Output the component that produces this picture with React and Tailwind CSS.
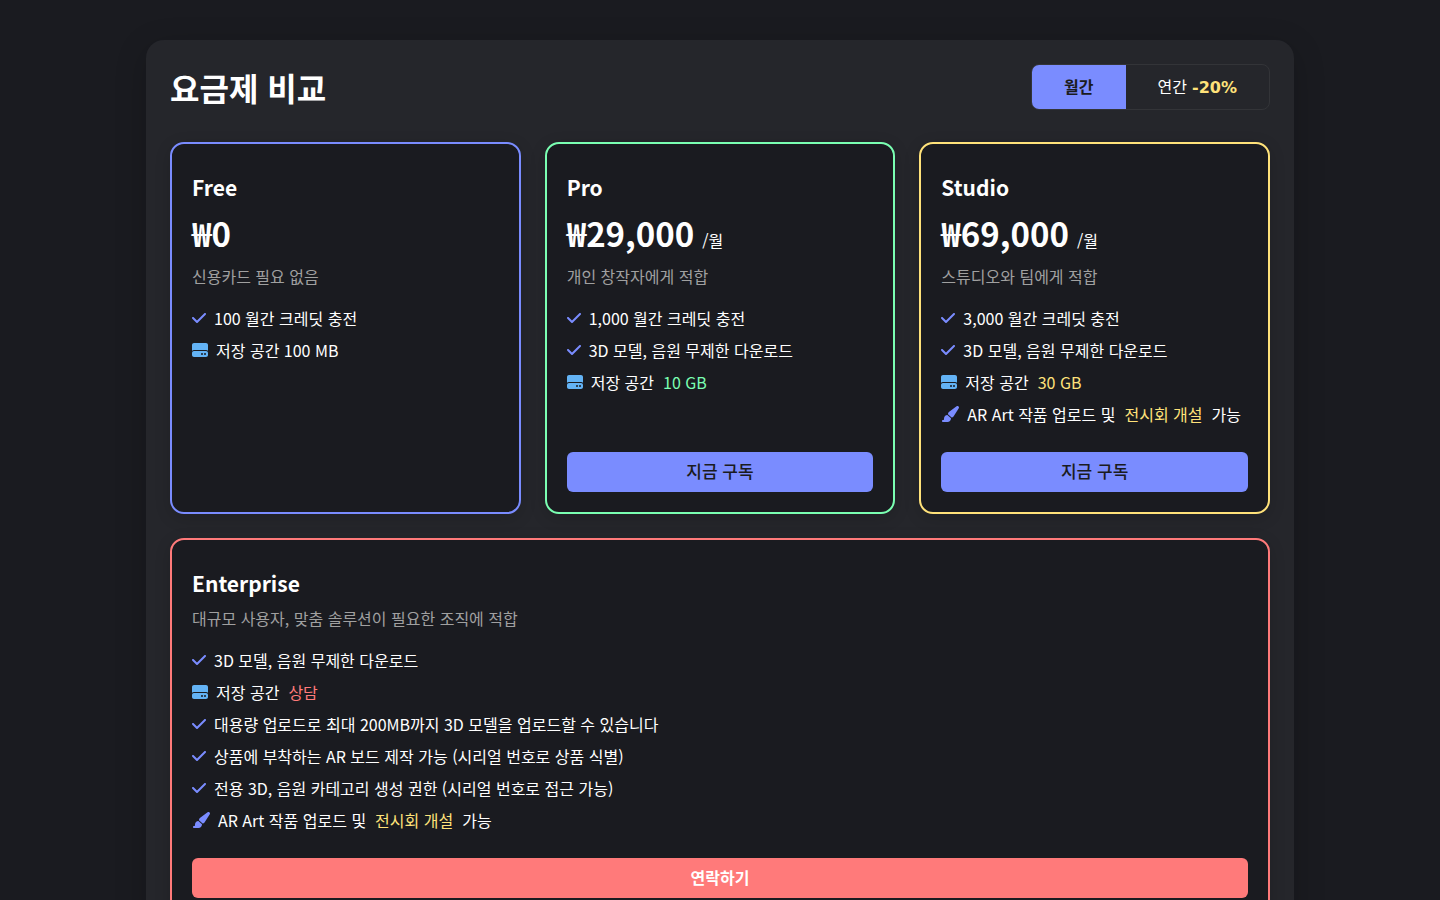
import clsx from 'clsx'
import { useState } from 'react'
import { FaCheck, FaHardDrive, FaPaintbrush } from 'react-icons/fa6'

const check = <FaCheck className="h-4 w-[14px] shrink-0 text-[#7a8cff]" />
const drive = <FaHardDrive className="h-4 w-4 shrink-0 text-[#63b3f5]" />
const brush = <FaPaintbrush className="h-4 w-[18px] shrink-0 text-[#7a8cff]" />

const plans = [
  {
    name: 'Free',
    price: '₩0',
    desc: '신용카드 필요 없음',
    border: 'border-[#7a8cff]',
    features: [
      { icon: check, text: '100 월간 크레딧 충전' },
      { icon: drive, text: '저장 공간 100 MB' },
    ],
  },
  {
    name: 'Pro',
    price: '₩29,000',
    unit: '/월',
    desc: '개인 창작자에게 적합',
    border: 'border-[#7affb2]',
    accent: 'text-[#7affb2]',
    features: [
      { icon: check, text: '1,000 월간 크레딧 충전' },
      { icon: check, text: '3D 모델, 음원 무제한 다운로드' },
      { icon: drive, text: '저장 공간', mark: '10 GB' },
    ],
    action: '지금 구독',
  },
  {
    name: 'Studio',
    price: '₩69,000',
    unit: '/월',
    desc: '스튜디오와 팀에게 적합',
    border: 'border-[#ffe27a]',
    accent: 'text-[#ffe27a]',
    features: [
      { icon: check, text: '3,000 월간 크레딧 충전' },
      { icon: check, text: '3D 모델, 음원 무제한 다운로드' },
      { icon: drive, text: '저장 공간', mark: '30 GB' },
      { icon: brush, text: 'AR Art 작품 업로드 및', mark: '전시회 개설', after: '가능' },
    ],
    action: '지금 구독',
  },
  {
    name: 'Enterprise',
    desc: '대규모 사용자, 맞춤 솔루션이 필요한 조직에 적합',
    border: 'border-[#ff7a7a]',
    accent: 'text-[#ff7a7a]',
    wide: true,
    features: [
      { icon: check, text: '3D 모델, 음원 무제한 다운로드' },
      { icon: drive, text: '저장 공간', mark: '상담' },
      { icon: check, text: '대용량 업로드로 최대 200MB까지 3D 모델을 업로드할 수 있습니다' },
      { icon: check, text: '상품에 부착하는 AR 보드 제작 가능 (시리얼 번호로 상품 식별)' },
      { icon: check, text: '전용 3D, 음원 카테고리 생성 권한 (시리얼 번호로 접근 가능)' },
      { icon: brush, text: 'AR Art 작품 업로드 및', mark: '전시회 개설', markColor: 'text-[#ffe27a]', after: '가능' },
    ],
    action: '연락하기',
  },
]

function PlanCard({ plan }) {
  return (
    <article
      className={clsx(
        'flex flex-col rounded-[14px] border-2 bg-[#1a1b20] p-5 shadow-[0_4px_16px_rgba(0,0,0,0.15)]',
        plan.border,
        plan.wide && 'md:col-span-3',
      )}
    >
      <h2 className="mt-2 text-[21px] leading-[30px] font-bold">{plan.name}</h2>
      {plan.price ? (
        <p className="mt-2 flex items-baseline gap-2 text-[33px] leading-[46px] font-bold">
          {plan.price}
          {plan.unit ? <span className="text-base leading-6 font-normal">{plan.unit}</span> : null}
        </p>
      ) : null}
      <p className="mt-2 leading-6 text-[#a0a0a0]">{plan.desc}</p>
      <ul className="mt-[18px] flex flex-1 flex-col gap-2">
        {plan.features.map((item) => (
          <li key={item.text} className="flex items-center gap-2">
            {item.icon}
            <span>{item.text}</span>
            {item.mark ? <span className={clsx('mx-px', item.markColor || plan.accent)}>{item.mark}</span> : null}
            {item.after ? <span>{item.after}</span> : null}
          </li>
        ))}
      </ul>
      {plan.action ? (
        <button
          type="button"
          className={clsx(
            'mt-[26px] h-10 w-full rounded-md pb-0.5',
            plan.wide ? 'bg-[#ff7a7a] text-base font-bold text-white' : 'bg-[#7a8cff] text-[17px] font-medium text-[#1a1b20]',
          )}
        >
          {plan.action}
        </button>
      ) : null}
    </article>
  )
}

export default function App() {
  const [yearly, setYearly] = useState(false)

  const tab = (active) =>
    clsx('px-8 pt-[11px] pb-[9px] leading-6', active ? 'bg-[#7a8cff] font-bold text-[#1a1b20]' : 'text-white')

  return (
    <main lang="ko" className="min-h-screen bg-[#1a1b20] py-10 font-['Noto_Sans_CJK_KR',sans-serif] text-base text-white">
      <section className="mx-auto w-full max-w-[1148px] rounded-[18px] bg-[#25262b] p-6 shadow-[0_8px_32px_rgba(0,0,0,0.2)]">
        <header className="mb-8 flex items-center justify-between">
          <h1 className="text-[32px] leading-[46px] font-bold">요금제 비교</h1>
          <div className="flex overflow-hidden rounded-lg border border-[#333438] font-['DejaVu_Sans','Noto_Sans_CJK_KR',sans-serif]">
            <button type="button" className={tab(!yearly)} aria-pressed={!yearly} onClick={() => setYearly(false)}>
              월간
            </button>
            <button type="button" className={tab(yearly)} aria-pressed={yearly} onClick={() => setYearly(true)}>
              연간 <span className="font-bold text-[#ffe27a]">-20%</span>
            </button>
          </div>
        </header>

        <div className="grid gap-6 md:grid-cols-3">
          {plans.map((plan) => (
            <PlanCard key={plan.name} plan={plan} />
          ))}
        </div>
      </section>
    </main>
  )
}
